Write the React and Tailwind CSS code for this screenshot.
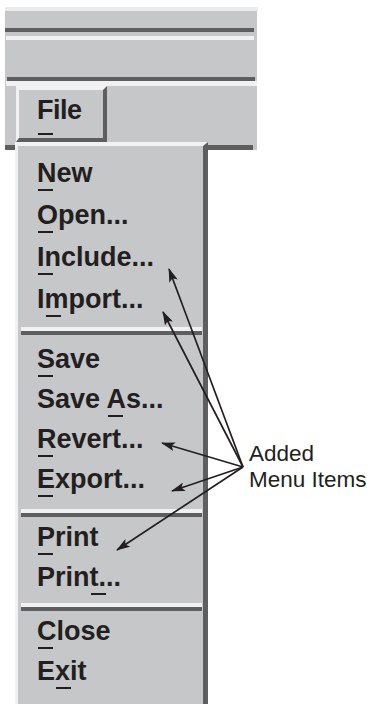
import React from "react";

const GRAY = "bg-[#c6c7c9]";

function U({ children }) {
  return (
    <span className="relative">
      {children}
      <span className="absolute left-[1px] top-[31px] h-[2px] w-[15px] bg-[#231f20]" />
    </span>
  );
}

function Item({ pre = "", u, post = "", h = "h-[40px] leading-[40px]" }) {
  return (
    <div className={`${h} pl-[19px] whitespace-nowrap`}>
      {pre}
      <U>{u}</U>
      {post}
    </div>
  );
}

function Sep({ mt }) {
  return (
    <div className={`${mt} ml-[3px] mr-[1px]`}>
      <div className="h-[4px] bg-[#f1f1f2]" />
      <div className="h-[4px] bg-[#5e5e60]" />
    </div>
  );
}

function Arrows() {
  const o = [243, 467];
  const tips = [
    [169, 269],
    [163, 312],
    [162, 443],
    [172, 491],
    [117, 550],
  ];
  return (
    <svg className="absolute left-0 top-0 pointer-events-none" width="367" height="704" viewBox="0 0 367 704">
      <defs>
        <marker id="ah" markerWidth="14" markerHeight="9" refX="13" refY="4.5" orient="auto" markerUnits="userSpaceOnUse">
          <path d="M0,0 L14,4.5 L0,9 L3,4.5 Z" fill="#231f20" />
        </marker>
      </defs>
      {tips.map(([x, y], i) => (
        <line key={i} x1={o[0]} y1={o[1]} x2={x} y2={y} stroke="#231f20" strokeWidth="1.7" markerEnd="url(#ah)" />
      ))}
    </svg>
  );
}

export default function App() {
  return (
    <div className="relative w-[367px] h-[704px] overflow-hidden bg-white font-['Liberation_Sans',Arial,sans-serif] text-[#231f20]">
      <div className="pt-[7px] pl-[5px]">
        <div className="w-[253px] h-[4px] bg-[#ebebec]" />
        <div className={`w-[252px] ${GRAY}`}>
          <div className="h-[17px]" />
          <div className="w-[249px] h-[4px] bg-[#5e5e60]" />
          <div className="h-[4px]" />
          <div className="ml-[1px] w-[248px] h-[4px] bg-[#f1f1f2]" />
          <div className="h-[37px]" />
          <div className="ml-[2px] w-[248px] h-[4px] bg-[#5e5e60]" />
          <div className="ml-[1px] w-[251px] h-[5px] bg-[#f1f1f2]" />
          <div className="h-[59px] pl-[11px]">
            <div className="w-[91px] h-[56px] border-t-[4px] border-l-[3px] border-r-[4px] border-b-[4px] border-t-[#f1f1f2] border-l-[#f1f1f2] border-r-[#5e5e60] border-b-[#5e5e60] pl-[18px] pt-[5px]">
              <div className="text-[27px] font-bold leading-[30px] tracking-[-0.5px]">
                <span className="relative">
                  F
                  <span className="absolute left-[1px] top-[38px] h-[2px] w-[15px] bg-[#231f20]" />
                </span>
                ile
              </div>
            </div>
          </div>
          <div className="w-[248px] h-[5px] bg-[#5e5e60]" />
        </div>
      </div>

      <div className={`absolute left-[15px] top-[142px] bottom-0 w-[193px] ${GRAY} border-t-[4px] border-l-[3px] border-r-[5px] border-t-[#f1f1f2] border-l-[#f1f1f2] border-r-[#5e5e60] text-[27px] font-bold`}>
        <div className="pt-[6px]">
          <Item u="N" post="ew" h="h-[42px] leading-[42px]" />
          <Item u="O" post="pen..." h="h-[42px] leading-[42px]" />
          <Item u="I" post="nclude..." h="h-[42px] leading-[42px]" />
          <Item pre="I" u="m" post="port..." h="h-[42px] leading-[42px]" />
        </div>
        <Sep mt="mt-[7px]" />
        <div className="pt-[4px]">
          <Item u="S" post="ave" />
          <Item pre="Save " u="A" post="s..." />
          <Item u="R" post="evert..." />
          <Item u="E" post="xport..." />
        </div>
        <Sep mt="mt-[10px]" />
        <div>
          <Item u="P" post="rint" />
          <Item pre="Prin" u="t" post="..." />
        </div>
        <Sep mt="mt-[6px]" />
        <div>
          <Item u="C" post="lose" />
          <Item pre="E" u="x" post="it" />
        </div>
      </div>

      <Arrows />

      <div className="absolute left-[249px] top-[441px] text-[22.5px] leading-[26px] whitespace-nowrap">
        <div>Added</div>
        <div>Menu Items</div>
      </div>
    </div>
  );
}
